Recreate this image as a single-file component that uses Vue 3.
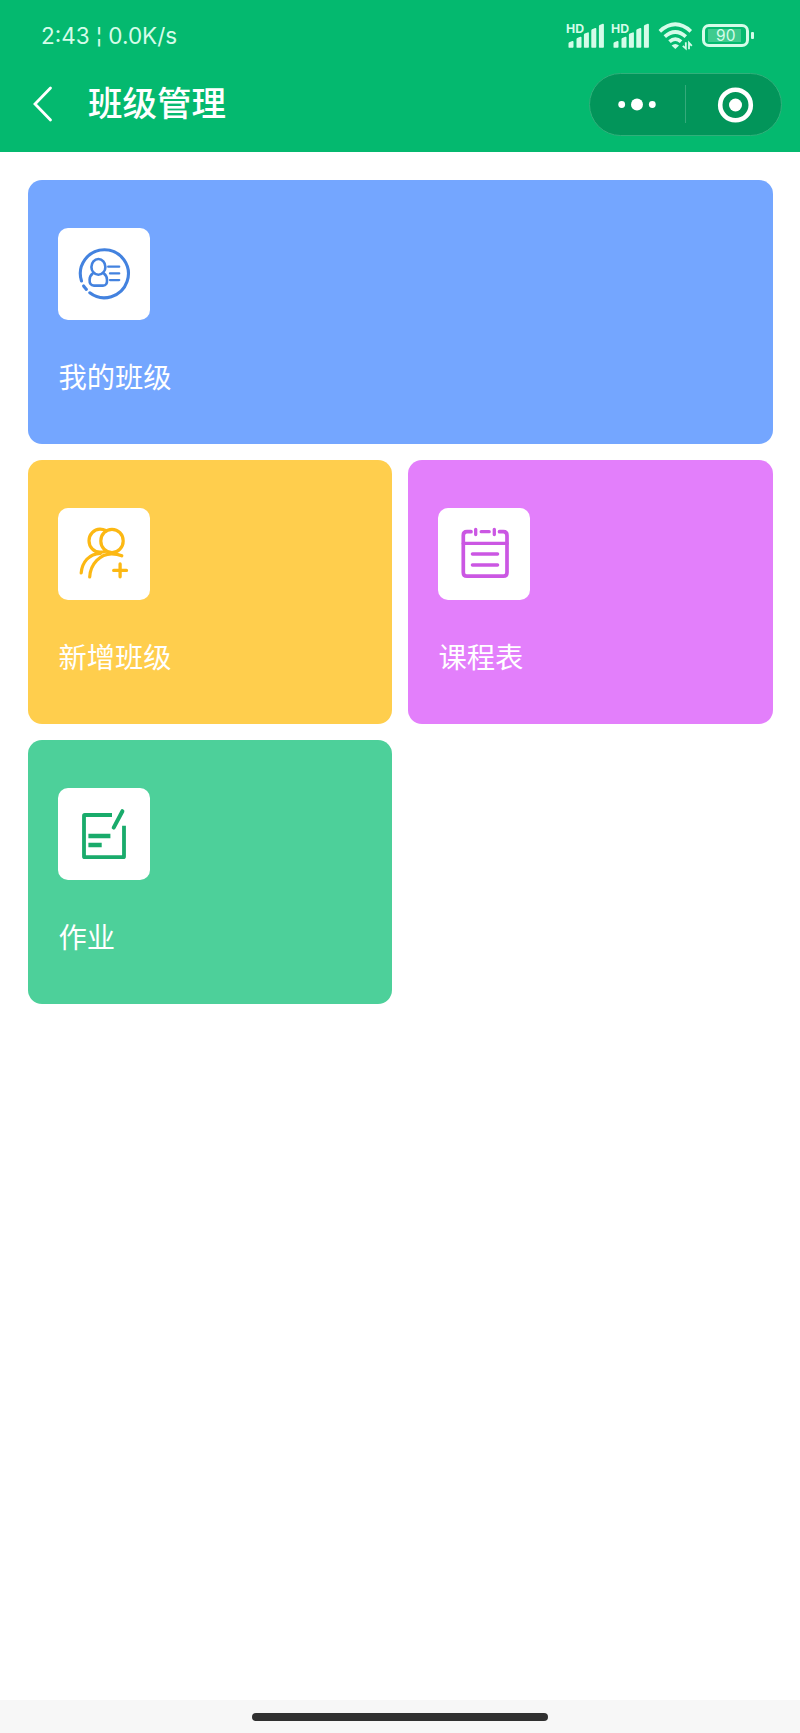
<template>
  <div class="page">
    <header>
      <div class="status">
        <span class="clock">2:43 ¦ 0.0K/s</span>
        <div class="indicators">
          <svg v-for="n in 2" :key="n" class="signal" width="44" height="30" viewBox="0 0 44 30">
            <text x="0" y="12">HD</text>
            <path v-for="bar in bars" :key="bar.x" :d="`M${bar.x} 26.7V${bar.top + 1.4}q0-.8 .8-1.2l3-1.2q1.2-.2 1.2 .7V26q0 .8-.8 .8h-3.4q-.9 0-.9-.8z`" />
          </svg>
          <svg class="wifi" width="36" height="30" viewBox="0 0 36 30">
            <path class="wave" d="M1.8 10.3q15.5-14 31 0M6.8 15.6q10.5-9.3 21 0M11.5 20.7q5.8-5.2 11.6 0" />
            <path d="M13.6 24.6q3.7-3 7.4 0l-3.7 3.4z" />
            <path class="arrows" d="M27.8 21.2v6.4l-3-2.7M31 28.3v-6.5l2.8 3" />
          </svg>
          <div class="battery">
            <div class="level">90</div>
          </div>
          <i class="tip"></i>
        </div>
      </div>
      <nav>
        <svg class="back" width="20" height="36" viewBox="0 0 20 36">
          <path d="M17.5 2L2 18l15.5 16" />
        </svg>
        <h1>班级管理</h1>
        <div class="capsule">
          <svg width="96" height="62" viewBox="0 0 96 62">
            <circle cx="31.7" cy="31.5" r="3.4" />
            <circle cx="47" cy="31.5" r="6" />
            <circle cx="62.3" cy="31.5" r="3.4" />
          </svg>
          <i class="divider"></i>
          <svg width="95" height="62" viewBox="0 0 95 62">
            <circle class="ring" cx="49.5" cy="32" r="15.3" />
            <circle cx="49.5" cy="32" r="6.5" />
          </svg>
        </div>
      </nav>
    </header>
    <main>
      <div v-for="item in menu" :key="item.name" class="card" :class="item.name">
        <div class="tile">
          <svg width="92" height="92" viewBox="0 0 92 92">
            <path v-for="line in item.lines" :key="line.d" :d="line.d" :stroke-width="line.w" />
          </svg>
        </div>
        <p>{{ item.label }}</p>
      </div>
    </main>
    <footer>
      <div class="handle"></div>
    </footer>
  </div>
</template>

<script setup>
import { ref } from 'vue';

// barres du signal, de la plus petite à la plus grande
const bars = [
  { x: 2.5, top: 21 },
  { x: 10.5, top: 16.8 },
  { x: 17.9, top: 12.4 },
  { x: 25.3, top: 8 },
  { x: 32.9, top: 3.8 },
];

const menu = ref([
  {
    name: 'mine',
    label: '我的班级',
    lines: [
      { d: 'M23.5 53A24 24 0 1 1 31.8 64.8', w: 3.1 },
      { d: 'M25.6 58l2.8 3.4', w: 3.1 },
      { d: 'M40.4 31a7 7.9 0 1 1 0 15.8a7 7.9 0 1 1 0-15.8z', w: 2.6 },
      { d: 'M34.6 45.6q-2.8 2-3 6q-.3 6 4.4 6h9q4.4 0 4-6q-.2-4-3-6', w: 2.6 },
      { d: 'M50.2 38.7h11M52 45.4h9.2M52 52.1h9.2', w: 2.3 },
    ],
  },
  {
    name: 'add',
    label: '新增班级',
    lines: [
      { d: 'M54 21.3a11.2 11.6 0 1 1 0 23.2a11.2 11.6 0 1 1 0-23.2z', w: 3.2 },
      { d: 'M48.5 22.7Q45 21.2 42 21.2a11 11.5 0 0 0 0 23q3 0 5.5-1', w: 3.2 },
      { d: 'M23.2 65C24 54.5 31 45.5 42.5 45.3', w: 3.2 },
      { d: 'M31.7 69C32.5 55.5 42.5 46 53.5 45.8q6 0 10.3 2', w: 3.2 },
      { d: 'M55.7 62.4h12.8M62.1 56v12.8', w: 3.3 },
    ],
  },
  {
    name: 'timetable',
    label: '课程表',
    lines: [
      { d: 'M33 23.7h-4q-3.7 0-3.7 3.7v37q0 3.7 3.7 3.7h36.3q3.7 0 3.7-3.7v-37q0-3.7-3.7-3.7h-3.8', w: 3.7 },
      { d: 'M43.2 23.7h8M37.7 21.3v5.2M56.3 21.3v5.2', w: 3.3 },
      { d: 'M25.3 35.4h43.7', w: 3.3 },
      { d: 'M34.5 46h25M34.5 57h25', w: 3.6 },
    ],
  },
  {
    name: 'homework',
    label: '作业',
    lines: [
      { d: 'M54 27H26.8q-.8 0-.8 .8v40.6q0 .8 .8 .8h38.4q.8 0 .8-.8V37.7', w: 3.8 },
      { d: 'M64.4 23.2l-8.7 16.4', w: 4 },
      { d: 'M30.4 48h22M30.4 57h13.3', w: 4.3 },
    ],
  },
]);
</script>

<style>
body {
  margin: 0;
  background-color: white;
}
</style>

<style scoped>
.page {
  display: flex;
  flex-direction: column;
  height: 1733px;
  font-family: "Noto Sans CJK SC", sans-serif;
}

header {
  height: 151.7px;
  background-color: #04b96f;
  color: white;
}

.status {
  display: flex;
  justify-content: space-between;
  height: 72.7px;
  padding: 0 46.5px 0 41px;
  box-sizing: border-box;
  color: #d5fce9;
}

.clock {
  padding-top: 21.5px;
  font: 22.5px/28px Inter, sans-serif;
  white-space: pre;
}

.indicators {
  display: flex;
  align-items: flex-start;
  padding-top: 20.5px;
}

.indicators svg {
  fill: #d5fce9;
}

.signal {
  margin-right: 0.3px;
}

.signal text {
  font: bold 12.3px Inter, sans-serif;
}

.wifi {
  margin: 0 8.5px 0 3px;
}

.wave, .arrows {
  fill: none;
  stroke: #d5fce9;
  stroke-width: 3.7;
}

.arrows {
  stroke-width: 1.8;
}

.battery {
  width: 47px;
  height: 23px;
  margin-top: 3px;
  padding: 2px 3px;
  border: 3px solid #d5fce9;
  border-radius: 7px;
  box-sizing: border-box;
}

.level {
  width: 33px;
  height: 13px;
  background-color: #3fcb8e;
  font: 15.5px/13px Inter, sans-serif;
  text-indent: 2px;
  text-align: center;
}

.tip {
  width: 2.7px;
  height: 7px;
  margin: 11px 0 0 1.5px;
  border-radius: 1px;
  background-color: #d5fce9;
}

nav {
  display: flex;
  align-items: center;
  height: 63.3px;
  padding: 0 18px 0 33px;
}

.back {
  fill: none;
  stroke: white;
  stroke-width: 2.8;
  stroke-linecap: round;
}

h1 {
  margin: -7px auto 0 35px;
  font-size: 34.5px;
  font-weight: 500;
  line-height: 50px;
}

.capsule {
  display: flex;
  align-items: center;
  width: 193px;
  height: 63.5px;
  box-sizing: border-box;
  border: 1px solid #31b07b;
  border-radius: 32px;
  background-color: #02955a;
}

.capsule svg {
  flex: none;
  fill: white;
}

.capsule .ring {
  fill: none;
  stroke: white;
  stroke-width: 4.6;
}

.divider {
  flex: none;
  width: 1px;
  height: 38px;
  margin: 0 0 0 -1px;
  background-color: #35aa7b;
}

main {
  flex: 1;
  display: grid;
  grid-template-columns: 1fr 1fr;
  grid-auto-rows: 264.3px;
  gap: 15.6px;
  padding: 28.3px 27.5px 0 28px;
}

.card {
  padding: 48px 30.4px;
  box-sizing: border-box;
  border-radius: 14px;
}

.tile {
  width: 92px;
  height: 92px;
  border-radius: 10px;
  background-color: white;
}

.tile svg {
  display: block;
  fill: none;
  stroke-linejoin: round;
}

.card p {
  margin: 36.3px 0 0;
  font-size: 28.3px;
  font-weight: 400;
  line-height: 40px;
  color: white;
}

.mine {
  grid-column: span 2;
  background-color: #74a6ff;
  stroke: #4382df;
  stroke-linecap: round;
}

.add {
  background-color: #ffce4d;
  stroke: #fcb813;
  stroke-linecap: round;
}

.timetable {
  background-color: #e37ffb;
  stroke: #cb57e3;
  stroke-linecap: round;
}

.homework {
  background-color: #4dd09a;
  stroke: #19ab6b;
}

.homework path:nth-child(2) {
  stroke-linecap: round;
}

footer {
  height: 32.7px;
  background-color: #f7f7f7;
}

.handle {
  width: 296px;
  height: 7.5px;
  margin: 12.7px auto 0;
  border-radius: 4px;
  background-color: #303030;
}
</style>
